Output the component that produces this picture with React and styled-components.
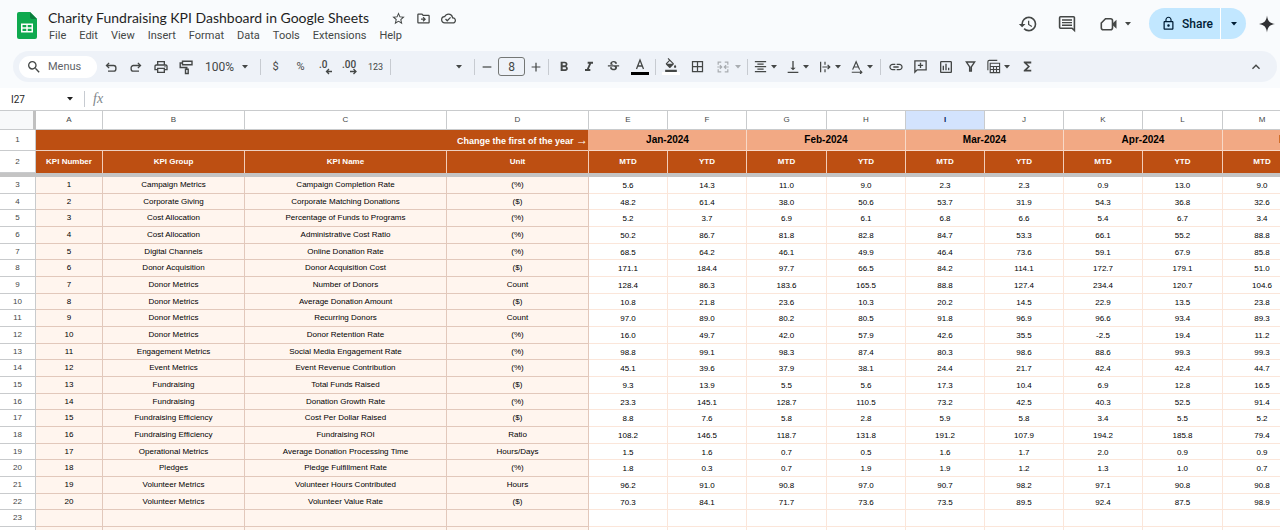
import styled, { createGlobalStyle, css } from 'styled-components'
import {
  MdStarBorder,
  MdHistory,
  MdOutlineCloudDone,
  MdOutlineDriveFileMove,
  MdLockOutline,
  MdSearch,
  MdOutlinePrint,
  MdFormatBold,
  MdFormatItalic,
  MdStrikethroughS,
  MdFormatColorFill,
  MdBorderAll,
  MdFormatAlignCenter,
  MdVerticalAlignBottom,
  MdLink,
  MdOutlineInsertChart,
  MdFunctions,
  MdKeyboardArrowUp,
} from 'react-icons/md'

const colors = {
  chrome: '#f9fbfd',
  toolbar: '#eef2f8',
  icon: '#444746',
  text: '#1f1f1f',
  line: '#c9cbcd',
  rust: '#bd4f12',
  peach: '#f2a984',
  cream: '#fff5ee',
  creamLine: '#e2c8bb',
  bodyLine: '#fbe6da',
  share: '#c2e7ff',
  navy: '#001d35',
}

const GlobalStyle = createGlobalStyle`
  * {
    box-sizing: border-box;
  }
  body {
    margin: 0;
    background: #fff;
    overflow: hidden;
  }
  button, input, select {
    margin: 0;
    padding: 0;
    border: 0;
    background: none;
    font: inherit;
    color: inherit;
    outline: none;
  }
`

const Page = styled.div`
  display: flex;
  flex-direction: column;
  height: 100vh;
  overflow: hidden;
  font-family: Roboto, 'Liberation Sans', sans-serif;
  font-size: 12px;
  color: ${colors.icon};
`

const Chrome = styled.header`
  background: ${colors.chrome};
  padding-bottom: 6px;
`

const TitleBar = styled.div`
  display: flex;
  align-items: flex-start;
  padding: 8px 4px 7px 17px;
`

const Logo = styled.svg`
  width: 20px;
  height: 27px;
  margin: 4px 11px 0 0;
`

const TitleGroup = styled.div`
  flex: 1;
`

const TitleRow = styled.div`
  display: flex;
  align-items: center;
  height: 20px;
`

const Title = styled.h1`
  margin: 0 17px 0 0;
  font-family: Lato, sans-serif;
  font-size: 14px;
  font-weight: 400;
  line-height: 20px;
  color: ${colors.text};
  white-space: nowrap;
`

const IconButton = styled.button`
  display: flex;
  align-items: center;
  justify-content: center;
  width: ${({ $width }) => $width || 25}px;
  height: 20px;
  flex: none;
`

const MenuBar = styled.nav`
  display: flex;
  gap: 13px;
  height: 16px;
  padding-left: 1px;
`

const MenuButton = styled.button`
  font-size: 11px;
  line-height: 16px;
`

const Actions = styled.div`
  display: flex;
  align-items: center;
  height: 31px;
`

const ShareGroup = styled.div`
  display: flex;
  height: 31px;
  margin: 0 12px 0 3px;
  border-radius: 16px;
  background: ${colors.share};
  color: ${colors.navy};
  overflow: hidden;
`

const ShareButton = styled.button`
  display: flex;
  align-items: center;
  gap: 6px;
  width: 71px;
  padding-left: 12px;
  font-weight: 500;
`

const ShareMenu = styled.button`
  display: flex;
  align-items: center;
  justify-content: center;
  width: 26px;
  border-left: 1px solid #fff;
`

const Toolbar = styled.div`
  display: flex;
  align-items: center;
  height: 31px;
  margin: 0 3px 0 13px;
  padding: 0 9px 0 6px;
  border-radius: 16px;
  background: ${colors.toolbar};
`

const SearchPill = styled.label`
  display: flex;
  align-items: center;
  gap: 6px;
  width: 78px;
  height: 22px;
  margin-right: 1px;
  padding-left: 7px;
  border-radius: 11px;
  background: #fff;

  input {
    width: 40px;
    font-size: 11px;
  }
  input::placeholder {
    color: #5f6368;
    opacity: 1;
  }
`

const SelectBox = styled.label`
  display: flex;
  align-items: center;
  justify-content: space-between;
  width: ${({ $width }) => $width}px;
  height: 20px;
  padding: 0 10px 0 7px;

  select {
    flex: 1;
    min-width: 0;
    appearance: none;
  }
`

const Divider = styled.span`
  flex: none;
  width: 1px;
  height: 16px;
  margin: 0 2px;
  background: #c7cbd1;
`

const TextTool = styled(IconButton)`
  font-size: ${({ $size }) => $size || 11}px;
`

const SizeInput = styled.input`
  width: 27px;
  height: 19px;
  margin: 0 1px;
  border: 1px solid #747775;
  border-radius: 3px;
  text-align: center;
`

const Split = styled.button`
  display: flex;
  align-items: center;
  width: 32px;
  height: 20px;
  flex: none;
  ${({ $disabled }) =>
    $disabled &&
    css`
      width: 34px;
      color: #a9adb1;
    `}
`

const SplitIcon = styled.span`
  display: flex;
  justify-content: center;
  width: ${({ $wide }) => ($wide ? 24 : 21)}px;
`

const ColorTool = styled(IconButton)`
  flex-direction: column;
  height: 22px;

  i {
    width: 18px;
    height: 3px;
    background: ${({ $bar }) => $bar};
  }
`

const Spacer = styled.span`
  flex: 1;
`

const FormulaBar = styled.div`
  display: flex;
  align-items: center;
  height: 22px;
  padding-left: 11px;
`

const NameBox = styled.label`
  display: flex;
  align-items: center;
  width: 71px;
  padding-right: 9px;
  font-size: 10px;
  color: ${colors.text};

  input {
    flex: 1;
    min-width: 0;
  }
`

const FormulaLabel = styled.label`
  display: flex;
  flex: 1;
  align-items: center;
  gap: 8px;
  padding-left: 6px;
  color: #80868b;

  input {
    flex: 1;
  }
`

const Fx = styled.em`
  font-family: 'Liberation Serif', serif;
  font-size: 14px;
  line-height: 14px;
`

const GridArea = styled.main`
  flex: 1;
  min-height: 0;
  overflow: hidden;
  border-top: 1px solid ${colors.line};
`

const Sheet = styled.table`
  table-layout: fixed;
  width: 1381px;
  border-collapse: separate;
  border-spacing: 0;
  font-family: 'Liberation Sans', Arial, sans-serif;
  font-size: 8px;
  line-height: 12px;
  text-align: center;
  color: #000;

  th, td {
    padding: 0;
    white-space: nowrap;
  }
`

const Row = styled.tr`
  height: ${({ $height }) => $height}px;
`

const DataRow = styled.tr`
  height: 17px;

  &:nth-child(3n + 2) {
    height: 16px;
  }
`

const ColumnHead = styled.th`
  border-right: 1px solid ${colors.line};
  border-bottom: 1px solid ${colors.line};
  font-weight: 400;
  color: #444746;
  ${({ $active }) =>
    $active &&
    css`
      background: #d3e3fd;
      font-weight: 700;
      color: #0b2a5e;
    `}
`

const Corner = styled.th`
  background: #f8f9fa;
  border-right: 3px solid #c0c0c0;
  border-bottom: 1px solid ${colors.line};
`

const RowHead = styled.th`
  border-right: 1px solid ${colors.line};
  border-bottom: 1px solid ${colors.line};
  font-weight: 400;
  color: #444746;
`

const YearCell = styled.th`
  border-right: 1px solid ${colors.peach};
  border-bottom: 1px solid #eed0c0;
  background: ${colors.rust};
  font-size: 9px;
  text-align: right;
  color: #fff;
`

const Arrow = styled.span`
  font-size: 12px;
  font-weight: 400;
`

const MonthCell = styled.th`
  border-right: 1px solid #f8d9c8;
  border-bottom: 1px solid #f8d9c8;
  background: ${colors.peach};
  font-size: 10px;
  color: #000;
`

const LabelCell = styled.th`
  border-right: 1px solid #f3cdb9;
  background: ${colors.rust};
  color: #fff;
`

const FreezeBar = styled.td`
  height: 4px;
  background: #c4c4c4;
`

const InfoCell = styled.td`
  border-right: 1px solid ${colors.creamLine};
  border-bottom: 1px solid ${colors.creamLine};
  background: ${colors.cream};
`

const ValueCell = styled.td`
  && {
    padding-top: 2px;
  }
  border-right: 1px solid ${colors.bodyLine};
  border-bottom: 1px solid ${colors.bodyLine};
`

const columns = [
  ['A', 67],
  ['B', 142],
  ['C', 202],
  ['D', 142],
  ['E', 79],
  ['F', 79],
  ['G', 80],
  ['H', 79],
  ['I', 79],
  ['J', 79],
  ['K', 79],
  ['L', 80],
  ['M', 79],
  ['N', 79],
]

const months = ['Jan-2024', 'Feb-2024', 'Mar-2024', 'Apr-2024', 'May-2024']

const kpis = [
  ['Campaign Metrics', 'Campaign Completion Rate', '(%)', '5.6 14.3 11.0 9.0 2.3 2.3 0.9 13.0 9.0'],
  ['Corporate Giving', 'Corporate Matching Donations', '($)', '48.2 61.4 38.0 50.6 53.7 31.9 54.3 36.8 32.6'],
  ['Cost Allocation', 'Percentage of Funds to Programs', '(%)', '5.2 3.7 6.9 6.1 6.8 6.6 5.4 6.7 3.4'],
  ['Cost Allocation', 'Administrative Cost Ratio', '(%)', '50.2 86.7 81.8 82.8 84.7 53.3 66.1 55.2 88.8'],
  ['Digital Channels', 'Online Donation Rate', '(%)', '68.5 64.2 46.1 49.9 46.4 73.6 59.1 67.9 85.8'],
  ['Donor Acquisition', 'Donor Acquisition Cost', '($)', '171.1 184.4 97.7 66.5 84.2 114.1 172.7 179.1 51.0'],
  ['Donor Metrics', 'Number of Donors', 'Count', '128.4 86.3 183.6 165.5 88.8 127.4 234.4 120.7 104.6'],
  ['Donor Metrics', 'Average Donation Amount', '($)', '10.8 21.8 23.6 10.3 20.2 14.5 22.9 13.5 23.8'],
  ['Donor Metrics', 'Recurring Donors', 'Count', '97.0 89.0 80.2 80.5 91.8 96.9 96.6 93.4 89.3'],
  ['Donor Metrics', 'Donor Retention Rate', '(%)', '16.0 49.7 42.0 57.9 42.6 35.5 -2.5 19.4 11.2'],
  ['Engagement Metrics', 'Social Media Engagement Rate', '(%)', '98.8 99.1 98.3 87.4 80.3 98.6 88.6 99.3 99.3'],
  ['Event Metrics', 'Event Revenue Contribution', '(%)', '45.1 39.6 37.9 38.1 24.4 21.7 42.4 42.4 44.7'],
  ['Fundraising', 'Total Funds Raised', '($)', '9.3 13.9 5.5 5.6 17.3 10.4 6.9 12.8 16.5'],
  ['Fundraising', 'Donation Growth Rate', '(%)', '23.3 145.1 128.7 110.5 73.2 42.5 40.3 52.5 91.4'],
  ['Fundraising Efficiency', 'Cost Per Dollar Raised', '($)', '8.8 7.6 5.8 2.8 5.9 5.8 3.4 5.5 5.2'],
  ['Fundraising Efficiency', 'Fundraising ROI', 'Ratio', '108.2 146.5 118.7 131.8 191.2 107.9 194.2 185.8 79.4'],
  ['Operational Metrics', 'Average Donation Processing Time', 'Hours/Days', '1.5 1.6 0.7 0.5 1.6 1.7 2.0 0.9 0.9'],
  ['Pledges', 'Pledge Fulfillment Rate', '(%)', '1.8 0.3 0.7 1.9 1.9 1.2 1.3 1.0 0.7'],
  ['Volunteer Metrics', 'Volunteer Hours Contributed', 'Hours', '96.2 91.0 90.8 97.0 90.7 98.2 97.1 90.8 90.8'],
  ['Volunteer Metrics', 'Volunteer Value Rate', '($)', '70.3 84.1 71.7 73.6 73.5 89.5 92.4 87.5 98.9'],
]

const rows = kpis.map(([group, name, unit, values], i) => ({
  info: [i + 1, group, name, unit],
  values: [...values.split(' '), ''],
}))

const blankRow = { info: ['', '', '', ''], values: Array(10).fill('') }

function Caret() {
  return (
    <svg width="6" height="4" viewBox="0 0 6 4" aria-hidden="true">
      <path d="M0 0h6L3 3.5z" fill="currentColor" />
    </svg>
  )
}

function Stroke({ size = 16, width = 1.4, children }) {
  return (
    <svg
      width={size}
      height={size}
      viewBox="0 0 16 16"
      fill="none"
      stroke="currentColor"
      strokeWidth={width}
      aria-hidden="true"
    >
      {children}
    </svg>
  )
}

function Decimal({ digits, right }) {
  return (
    <svg width="17" height="16" viewBox="0 0 17 16" aria-hidden="true">
      <text
        x={right ? 0 : 2}
        y="9"
        fontSize="10"
        fontWeight="500"
        fontFamily="Roboto, sans-serif"
        fill="currentColor"
      >
        {digits}
      </text>
      <path
        d={right ? 'M8 12.5h6M11.5 10l2.5 2.5-2.5 2.5' : 'M15 12.5H9.5M12 10l-2.5 2.5L12 15'}
        fill="none"
        stroke="currentColor"
        strokeWidth="1.3"
      />
    </svg>
  )
}

function SplitTool({ label, disabled, children }) {
  return (
    <Split aria-label={label} $disabled={disabled}>
      <SplitIcon $wide={disabled}>{children}</SplitIcon>
      <Caret />
    </Split>
  )
}

function Header() {
  return (
    <TitleBar>
      <Logo viewBox="0 0 20 27" aria-hidden="true">
        <path d="M2 0h11l7 7v18a2 2 0 0 1-2 2H2a2 2 0 0 1-2-2V2a2 2 0 0 1 2-2z" fill="#0fa94f" />
        <path d="M13 0l7 7h-5a2 2 0 0 1-2-2z" fill="#0a7d3c" />
        <path
          d="M4 11.5h12v9H4zM5.5 13v2.2h3.8V13zm5.2 0v2.2h3.8V13zm-5.2 3.7V19h3.8v-2.3zm5.2 0V19h3.8v-2.3z"
          fill="#fff"
          fillRule="evenodd"
        />
      </Logo>
      <TitleGroup>
        <TitleRow>
          <Title>Charity Fundraising KPI Dashboard in Google Sheets</Title>
          <IconButton aria-label="Star">
            <MdStarBorder size={15} />
          </IconButton>
          <IconButton aria-label="Move">
            <MdOutlineDriveFileMove size={15} />
          </IconButton>
          <IconButton aria-label="Document status">
            <MdOutlineCloudDone size={15} />
          </IconButton>
        </TitleRow>
        <MenuBar>
          {['File', 'Edit', 'View', 'Insert', 'Format', 'Data', 'Tools', 'Extensions', 'Help'].map(
            (item) => (
              <MenuButton key={item}>{item}</MenuButton>
            )
          )}
        </MenuBar>
      </TitleGroup>
      <Actions>
        <IconButton $width={39} aria-label="Version history">
          <MdHistory size={20} />
        </IconButton>
        <IconButton $width={39} aria-label="Comments">
          <svg width="18" height="18" viewBox="0 0 18 18" aria-hidden="true">
            <path
              d="M2.5 1.8h13a.9.9 0 0 1 .9.9v12.8l-2.4-2.3H2.5a.9.9 0 0 1-.9-.9V2.7a.9.9 0 0 1 .9-.9z"
              fill="none"
              stroke="currentColor"
              strokeWidth="1.6"
            />
            <path d="M4 5h10M4 7.6h10M4 10.2h10" stroke="currentColor" strokeWidth="1.4" />
          </svg>
        </IconButton>
        <IconButton $width={60} aria-label="Meet">
          <svg width="32" height="16" viewBox="0 0 32 16" aria-hidden="true">
            <path
              d="M5.5 2.8h5a2 2 0 0 1 2 2v6.9a2 2 0 0 1-2 2H3.3a2 2 0 0 1-2-2V7z"
              fill="none"
              stroke="currentColor"
              strokeWidth="1.6"
            />
            <path d="M13 7l3.5-3.2v9L13 9.6z" fill="currentColor" />
            <path d="M25 6h6l-3 3.4z" fill="currentColor" />
          </svg>
        </IconButton>
        <ShareGroup>
          <ShareButton>
            <MdLockOutline size={15} />
            Share
          </ShareButton>
          <ShareMenu aria-label="Share options">
            <Caret />
          </ShareMenu>
        </ShareGroup>
        <IconButton $width={18} aria-label="Gemini">
          <svg width="18" height="18" viewBox="0 0 18 18" aria-hidden="true">
            <path
              d="M9 .5c.7 5.4 2.5 7.6 8 8.5-5.5.9-7.300 3.100-8 8.500-.7-5.400-2.500-7.600-8-8.500 5.500-.9 7.300-3.100 8-8.500z"
              fill="#303134"
            />
          </svg>
        </IconButton>
      </Actions>
    </TitleBar>
  )
}

function Tools() {
  return (
    <Toolbar>
      <SearchPill>
        <MdSearch size={16} />
        <input placeholder="Menus" aria-label="Search the menus" />
      </SearchPill>
      <IconButton aria-label="Undo">
        <Stroke size={12} width={1.8}>
          <path d="M5.5 2.5L2 6l3.5 3.5M2 6h9.5a3 3 0 0 1 3 3v1.5a3 3 0 0 1-3 3H4" />
        </Stroke>
      </IconButton>
      <IconButton aria-label="Redo">
        <Stroke size={12} width={1.8}>
          <path d="M10.5 2.5L14 6l-3.5 3.5M14 6H4.5a3 3 0 0 0-3 3v1.5a3 3 0 0 0 3 3H12" />
        </Stroke>
      </IconButton>
      <IconButton aria-label="Print">
        <MdOutlinePrint size={16} />
      </IconButton>
      <IconButton aria-label="Paint format">
        <Stroke>
          <path d="M4.5 2.2H14v3.6H4.5zM4.5 4H2.2v4.5h6.6V10M7.5 10.2h2.7v4.3H7.5z" />
        </Stroke>
      </IconButton>
      <SelectBox $width={60}>
        <select aria-label="Zoom" defaultValue="100%">
          <option>100%</option>
        </select>
        <Caret />
      </SelectBox>
      <Divider />
      <TextTool>$</TextTool>
      <TextTool>%</TextTool>
      <IconButton aria-label="Decrease decimal places">
        <Decimal digits=".0" />
      </IconButton>
      <IconButton aria-label="Increase decimal places">
        <Decimal digits=".00" right />
      </IconButton>
      <TextTool $size={9}>123</TextTool>
      <Divider />
      <SelectBox $width={79}>
        <select aria-label="Font" />
        <Caret />
      </SelectBox>
      <Divider />
      <IconButton $width={20} aria-label="Decrease font size">
        <Stroke size={14}>
          <path d="M3 8h10" />
        </Stroke>
      </IconButton>
      <SizeInput aria-label="Font size" defaultValue="8" />
      <IconButton $width={20} aria-label="Increase font size">
        <Stroke size={14}>
          <path d="M3 8h10M8 3v10" />
        </Stroke>
      </IconButton>
      <Divider />
      <IconButton aria-label="Bold">
        <MdFormatBold size={16} />
      </IconButton>
      <IconButton aria-label="Italic">
        <MdFormatItalic size={16} />
      </IconButton>
      <IconButton aria-label="Strikethrough">
        <MdStrikethroughS size={15} />
      </IconButton>
      <ColorTool $width={27} $bar="#000" aria-label="Text color">
        <svg width="12" height="14" viewBox="0 0 12 14" aria-hidden="true">
          <path d="M2.5 11L6 2l3.5 9M3.6 8h4.8" fill="none" stroke="currentColor" strokeWidth="1.3" />
        </svg>
        <i />
      </ColorTool>
      <Divider />
      <ColorTool $bar="#fff" aria-label="Fill color">
        <MdFormatColorFill size={14} />
        <i />
      </ColorTool>
      <IconButton $width={28} aria-label="Borders">
        <MdBorderAll size={15} />
      </IconButton>
      <SplitTool label="Merge cells" disabled>
        <Stroke size={14}>
          <path d="M6 2.5H2.5v3M10 2.5h3.5v3M6 13.5H2.5v-3M10 13.5h3.5v-3M1.5 8H6M4.5 6l2 2-2 2M14.5 8H10M11.5 6l-2 2 2 2" />
        </Stroke>
      </SplitTool>
      <Divider />
      <SplitTool label="Horizontal align">
        <MdFormatAlignCenter size={15} />
      </SplitTool>
      <SplitTool label="Vertical align">
        <MdVerticalAlignBottom size={16} />
      </SplitTool>
      <SplitTool label="Text wrapping">
        <Stroke size={14}>
          <path d="M3 2v12M8 2v3.5M8 10.5V14M5 8h8.5M11 5.5L13.5 8 11 10.5" />
        </Stroke>
      </SplitTool>
      <SplitTool label="Text rotation">
        <Stroke size={14}>
          <path d="M3 11l4-9 4 9M4.2 8h5.6M2 14h11.5M11.5 12l2 2-2 2" />
        </Stroke>
      </SplitTool>
      <Divider />
      <IconButton aria-label="Insert link">
        <MdLink size={16} />
      </IconButton>
      <IconButton aria-label="Insert comment">
        <Stroke size={15}>
          <path d="M2 2h12v9.5H4.5L2 14zM8 4v5.5M5.2 6.8h5.6" />
        </Stroke>
      </IconButton>
      <IconButton aria-label="Insert chart">
        <MdOutlineInsertChart size={16} />
      </IconButton>
      <IconButton aria-label="Create a filter">
        <Stroke size={13} width={1.8}>
          <path d="M3 2.5h10L9 8.5v5H7v-5z" />
        </Stroke>
      </IconButton>
      <SplitTool label="Table views">
        <Stroke size={15} width={1.2}>
          <path d="M4.5 4.5h10v10h-10zM4.5 8h10M4.5 11.2h10M8 8v6.5M11.2 8v6.5M2 12V3a1.5 1.5 0 0 1 1.5-1.5H12" />
        </Stroke>
      </SplitTool>
      <IconButton aria-label="Functions">
        <MdFunctions size={15} />
      </IconButton>
      <Spacer />
      <IconButton aria-label="Hide the menus">
        <MdKeyboardArrowUp size={16} />
      </IconButton>
    </Toolbar>
  )
}

function SheetRow({ number, info, values }) {
  return (
    <DataRow>
      <RowHead scope="row">{number}</RowHead>
      {info.map((text, i) => (
        <InfoCell key={i}>{text}</InfoCell>
      ))}
      {values.map((value, i) => (
        <ValueCell key={i}>{value}</ValueCell>
      ))}
    </DataRow>
  )
}

function Grid() {
  return (
    <GridArea>
      <Sheet>
        <colgroup>
          <col width="36" />
          {columns.map(([letter, width]) => (
            <col key={letter} width={width} />
          ))}
        </colgroup>
        <thead>
          <Row $height={19}>
            <Corner />
            {columns.map(([letter]) => (
              <ColumnHead key={letter} $active={letter === 'I'}>
                {letter}
              </ColumnHead>
            ))}
          </Row>
          <Row $height={21}>
            <RowHead>1</RowHead>
            <YearCell colSpan={4}>
              Change the first of the year <Arrow>→</Arrow>
            </YearCell>
            {months.map((month) => (
              <MonthCell key={month} colSpan={2}>
                {month}
              </MonthCell>
            ))}
          </Row>
          <Row $height={22}>
            <RowHead>2</RowHead>
            {['KPI Number', 'KPI Group', 'KPI Name', 'Unit'].map((label) => (
              <LabelCell key={label}>{label}</LabelCell>
            ))}
            {months.map((month) => [
              <LabelCell key={`${month}-mtd`}>MTD</LabelCell>,
              <LabelCell key={`${month}-ytd`}>YTD</LabelCell>,
            ])}
          </Row>
          <tr>
            <FreezeBar colSpan={15} />
          </tr>
        </thead>
        <tbody>
          {rows.map((row, i) => (
            <SheetRow key={i} number={i + 3} {...row} />
          ))}
          <SheetRow number={23} {...blankRow} />
          <SheetRow number={24} {...blankRow} />
        </tbody>
      </Sheet>
    </GridArea>
  )
}

export default function App() {
  return (
    <Page>
      <GlobalStyle />
      <Chrome>
        <Header />
        <Tools />
      </Chrome>
      <FormulaBar>
        <NameBox>
          <input aria-label="Name box" defaultValue="I27" />
          <Caret />
        </NameBox>
        <Divider />
        <FormulaLabel>
          <Fx>fx</Fx>
          <input aria-label="Formula" />
        </FormulaLabel>
      </FormulaBar>
      <Grid />
    </Page>
  )
}
